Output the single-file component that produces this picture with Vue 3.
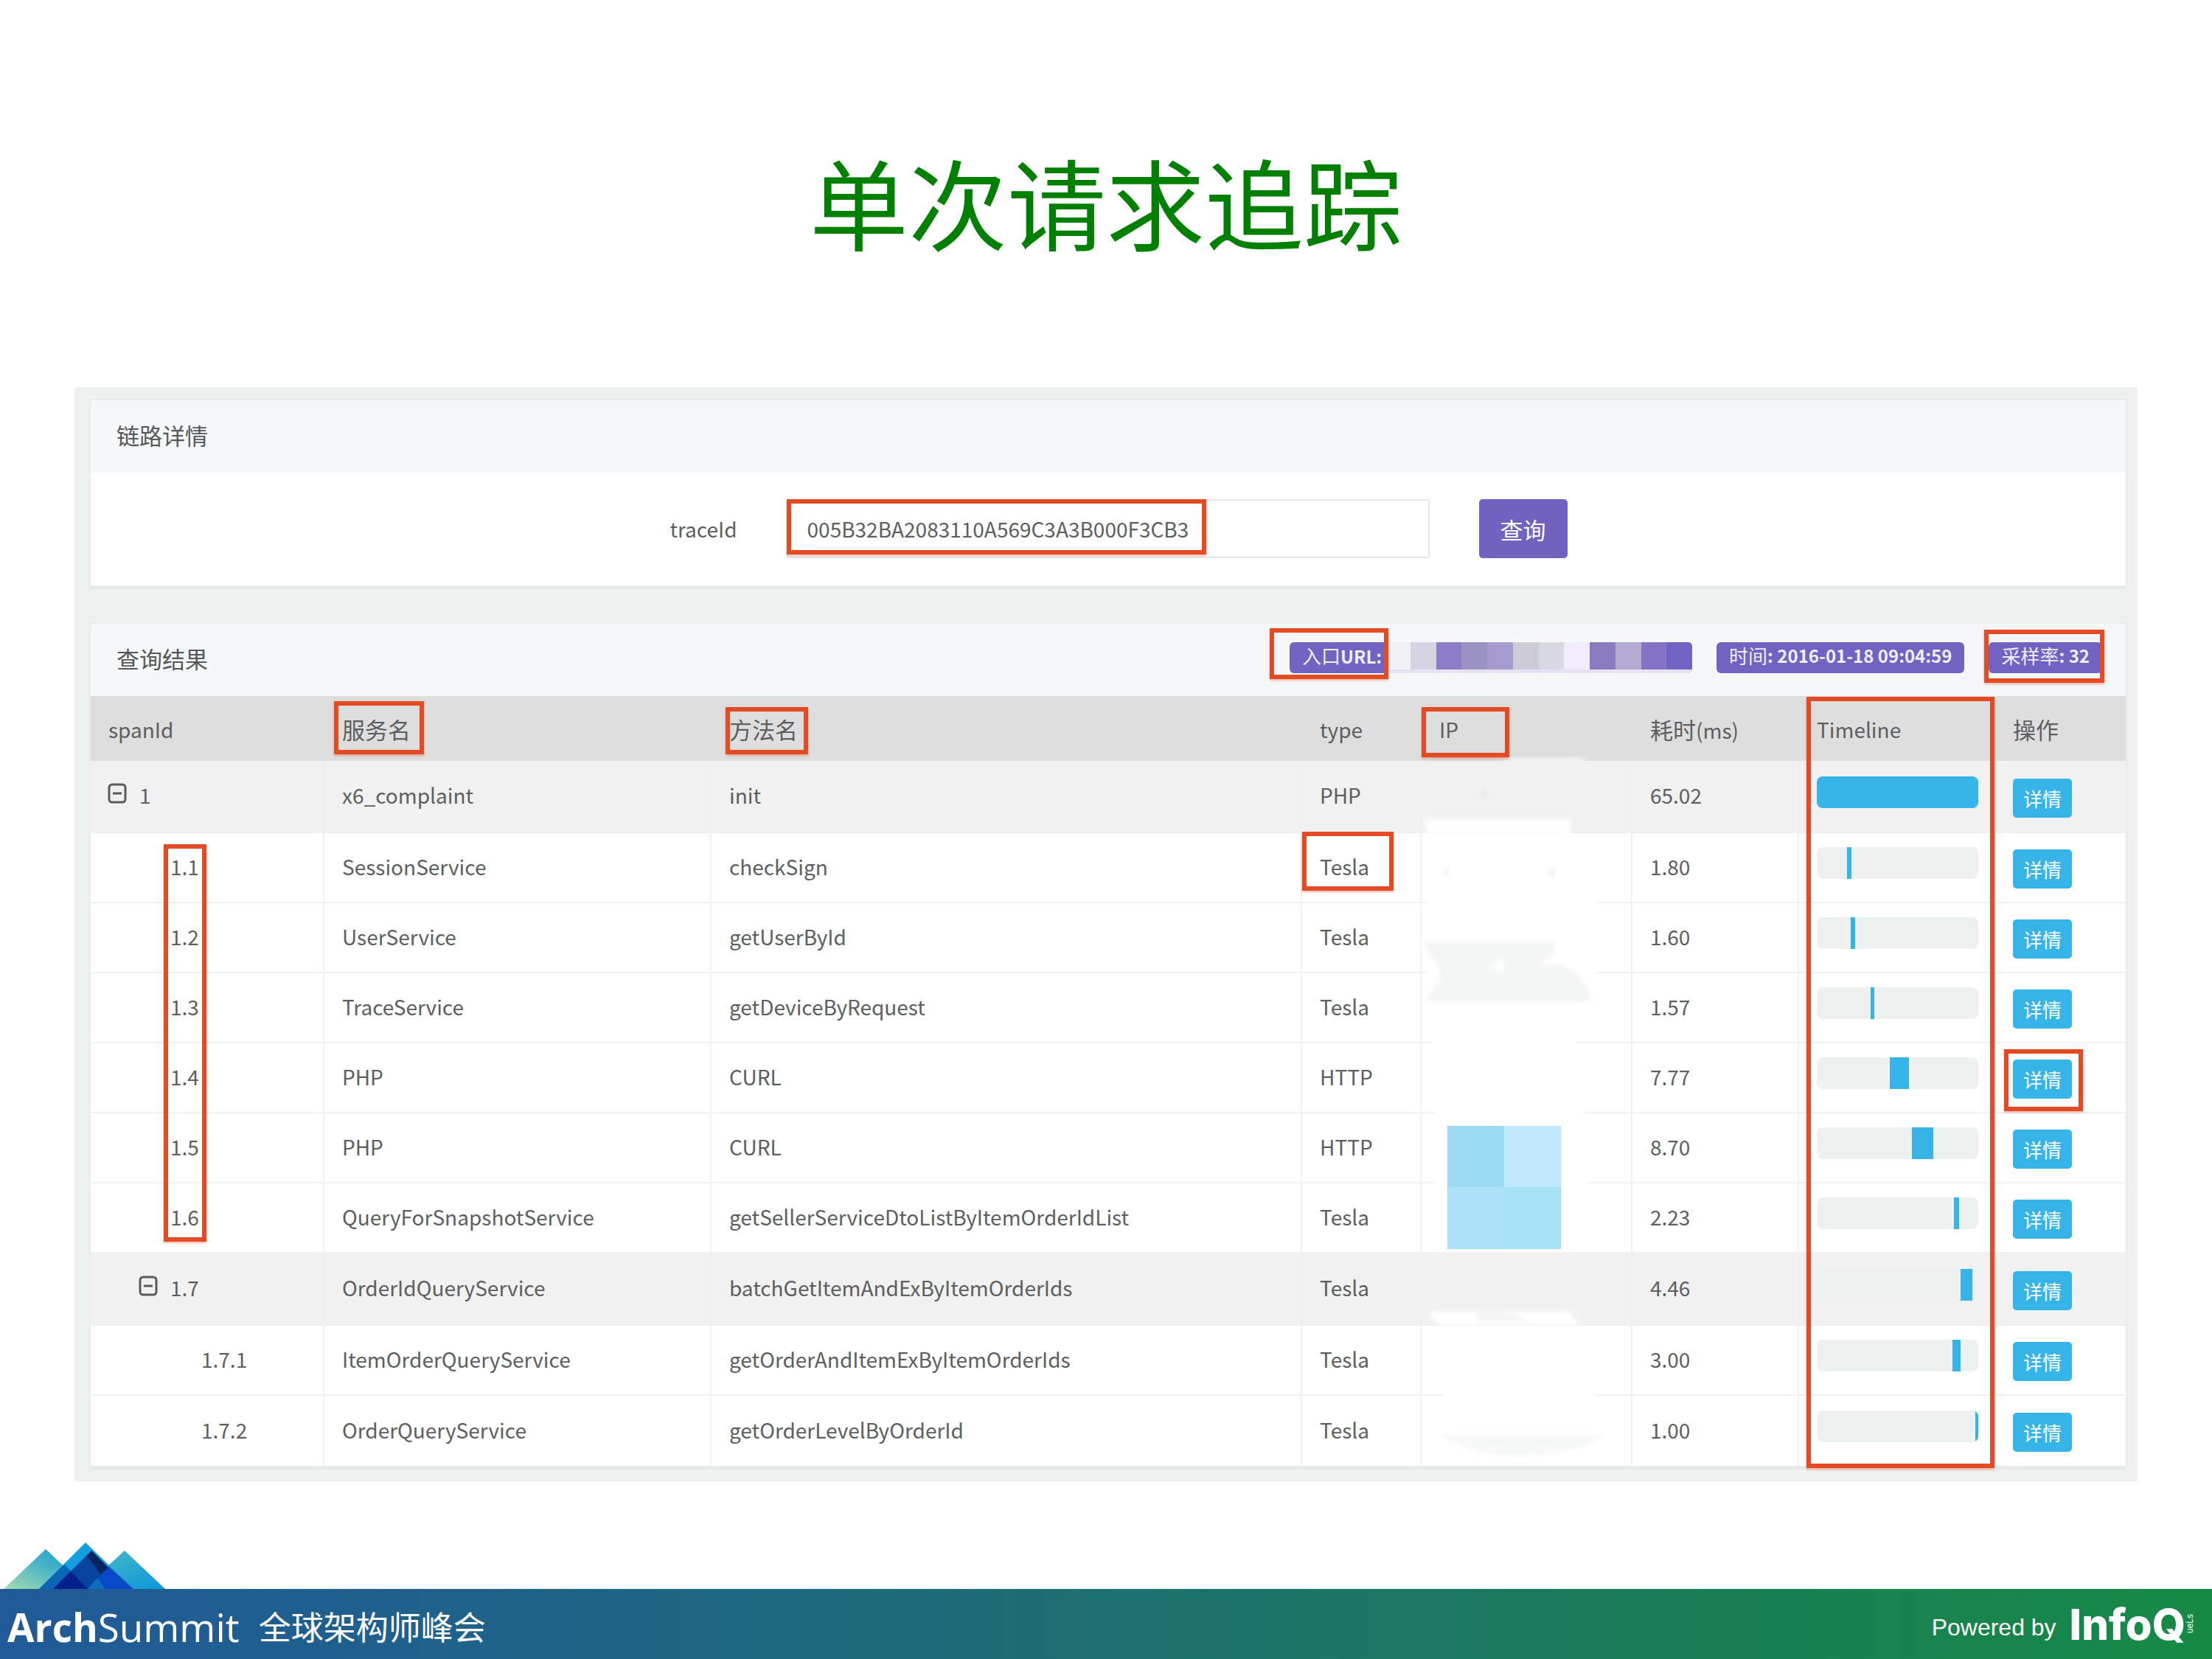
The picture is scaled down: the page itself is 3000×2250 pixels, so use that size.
<script setup>
import { ref } from 'vue'

const traceId = ref('005B32BA2083110A569C3A3B000F3CB3')

const urlBlocks = [
  '#f1f1f4', '#d6d3e2', '#8b7cc6', '#9a92c2', '#a59bcf', '#cccbd8',
  '#d8d9e4', '#f0ecfc', '#8b7cc0', '#b3aacf', '#8473c6', '#7063c3',
]

// start and length are percentages of the whole request
const spans = [
  { id: '1', depth: 0, open: true, service: 'x6_complaint', method: 'init', type: 'PHP', cost: '65.02', start: 0, length: 100 },
  { id: '1.1', depth: 1, service: 'SessionService', method: 'checkSign', type: 'Tesla', cost: '1.80', start: 18.7, length: 2.8 },
  { id: '1.2', depth: 1, service: 'UserService', method: 'getUserById', type: 'Tesla', cost: '1.60', start: 21.2, length: 2.4 },
  { id: '1.3', depth: 1, service: 'TraceService', method: 'getDeviceByRequest', type: 'Tesla', cost: '1.57', start: 33.4, length: 2 },
  { id: '1.4', depth: 1, service: 'PHP', method: 'CURL', type: 'HTTP', cost: '7.77', start: 45.3, length: 11.6 },
  { id: '1.5', depth: 1, service: 'PHP', method: 'CURL', type: 'HTTP', cost: '8.70', start: 58.8, length: 13.4 },
  { id: '1.6', depth: 1, service: 'QueryForSnapshotService', method: 'getSellerServiceDtoListByItemOrderIdList', type: 'Tesla', cost: '2.23', start: 85, length: 3.2 },
  { id: '1.7', depth: 1, open: true, service: 'OrderIdQueryService', method: 'batchGetItemAndExByItemOrderIds', type: 'Tesla', cost: '4.46', start: 89, length: 7.4 },
  { id: '1.7.1', depth: 2, service: 'ItemOrderQueryService', method: 'getOrderAndItemExByItemOrderIds', type: 'Tesla', cost: '3.00', start: 84, length: 5.2 },
  { id: '1.7.2', depth: 2, service: 'OrderQueryService', method: 'getOrderLevelByOrderId', type: 'Tesla', cost: '1.00', start: 98.2, length: 1.8 },
]
</script>

<template>
  <div class="slide">
    <h1>单次请求追踪</h1>

    <main class="console">
      <section class="card">
        <h2 class="card-head">链路详情</h2>
        <form class="search" @submit.prevent>
          <label for="trace">traceId</label>
          <div class="field">
            <input id="trace" v-model="traceId" type="text" />
            <span class="mark mark-trace"></span>
          </div>
          <button class="submit" type="submit">查询</button>
        </form>
      </section>

      <section class="card">
        <div class="card-head">
          <h2>查询结果</h2>
          <div class="badges">
            <div class="badge badge-url">
              <span class="url-label">入口<b>URL:</b></span>
              <span class="mosaic">
                <i v-for="(c, i) in urlBlocks" :key="i" :style="{ background: c }"></i>
              </span>
              <span class="mark mark-url"></span>
            </div>
            <div class="badge">时间<b>: 2016-01-18 09:04:59</b></div>
            <div class="badge badge-rate">采样率<b>: 32</b><span class="mark mark-rate"></span></div>
          </div>
        </div>

        <div class="table-wrap">
          <table>
            <colgroup>
              <col class="c-id" /><col class="c-service" /><col /><col class="c-type" />
              <col class="c-ip" /><col class="c-cost" /><col class="c-line" /><col class="c-action" />
            </colgroup>
            <thead>
              <tr>
                <th>spanId</th>
                <th><span class="cjk">服务名</span><span class="mark mark-service"></span></th>
                <th><span class="cjk">方法名</span><span class="mark mark-method"></span></th>
                <th>type</th>
                <th>IP<span class="mark mark-ip"></span></th>
                <th><span class="cjk">耗时</span>(ms)</th>
                <th>Timeline</th>
                <th><span class="cjk">操作</span></th>
              </tr>
            </thead>
            <tbody>
              <tr v-for="s in spans" :key="s.id" :class="{ group: s.open }">
                <td>
                  <span class="span-id" :class="'depth-' + s.depth">
                    <svg v-if="s.open" class="toggle" viewBox="0 0 26 28" aria-hidden="true">
                      <rect x="2" y="2" width="22" height="24" rx="4" />
                      <path d="M7 14H19" />
                    </svg>
                    {{ s.id }}
                  </span>
                  <span v-if="s.id === '1.1'" class="mark mark-children"></span>
                </td>
                <td>{{ s.service }}</td>
                <td>{{ s.method }}</td>
                <td>{{ s.type }}<span v-if="s.id === '1.1'" class="mark mark-type"></span></td>
                <td>
                  <svg v-if="s.id === '1'" class="redaction" viewBox="0 0 286 964" aria-hidden="true">
                    <g class="smear">
                      <path d="M112 6Q116 0 130 0H210Q222 0 224 10L226 14H112Z" fill="#f1f1f1" />
                      <path d="M4 85H204Q196 104 210 106H8Z" fill="#fff" />
                      <path d="M8 190H236V206H8ZM8 286H236V300H8ZM14 380H210V396H14ZM16 474H220V490H16ZM16 570H226V586H16ZM30 858H236V876H30Z" fill="#fff" />
                      <path d="M2 252H180Q186 266 160 282H190Q222 296 232 332H2Q30 306 24 290Z" fill="#f3f6f5" />
                      <path d="M84 290L108 272L116 290Z" fill="#fcfdfd" />
                      <path d="M10 753H204Q204 762 216 771H24Q14 764 10 753Z" fill="#fff" />
                      <path d="M76 756Q120 752 150 768Q110 762 76 766Z" fill="#f3f3f3" />
                      <path d="M26 920H250Q220 944 140 948Q60 948 26 920Z" fill="#f5f8f7" />
                      <circle cx="84" cy="50" r="4" fill="#e4e4e4" />
                      <path d="M30 160L36 148L36 160ZM172 160L180 148L178 164Z" fill="#e6e6e6" />
                    </g>
                    <rect x="35" y="501" width="77" height="83" fill="#9ddcf4" />
                    <rect x="112" y="501" width="77" height="83" fill="#bfe6fa" />
                    <rect x="35" y="584" width="77" height="84" fill="#abe2f6" />
                    <rect x="112" y="584" width="77" height="84" fill="#a5e2f3" />
                  </svg>
                </td>
                <td>{{ s.cost }}</td>
                <td>
                  <div class="track">
                    <i :style="{ marginLeft: s.start + '%', width: s.length + '%' }"></i>
                  </div>
                </td>
                <td>
                  <button class="detail" type="button">详情</button>
                  <span v-if="s.id === '1.4'" class="mark mark-detail"></span>
                </td>
              </tr>
            </tbody>
          </table>
          <span class="mark mark-timeline"></span>
        </div>
      </section>
    </main>

    <footer>
      <svg class="peaks" viewBox="0 0 224 63" aria-hidden="true">
        <defs>
          <linearGradient id="peak-l" x1="0" y1="1" x2="1" y2="0">
            <stop offset="0" stop-color="#a5dcae" /><stop offset="0.55" stop-color="#45b1c6" /><stop offset="1" stop-color="#0e9fdc" />
          </linearGradient>
          <linearGradient id="peak-r" x1="0" y1="0" x2="1" y2="1">
            <stop offset="0" stop-color="#4dbcc4" /><stop offset="1" stop-color="#0a97dc" />
          </linearGradient>
        </defs>
        <path d="M5 63L62 9L119 63Z" fill="url(#peak-l)" />
        <path d="M112 63L169 11L224 63Z" fill="url(#peak-r)" />
        <path d="M53 63L116 0L181 63Z" fill="#129fdd" />
        <path d="M53 63L87 30L119 63Z" fill="#0c63ae" />
        <path d="M87 30L96 39L72 63H53Z" fill="#0a67b6" />
        <path d="M72 63L124 11L148 35L119 63Z" fill="#08439f" />
        <path d="M124 11L148 35L138 45L118 18Z" fill="#06265f" />
        <path d="M148 33L181 63H142L132 48Z" fill="#0648c8" />
        <path d="M72 63L96 39L119 63Z" fill="#031f8c" />
        <path d="M119 63L132 48L142 63Z" fill="#0b6fc0" />
      </svg>
      <div class="bar">
        <p class="brand"><b>Arch</b>Summit <span>全球架构师峰会</span></p>
        <p class="powered">Powered by <b>InfoQ</b><small>ueLs</small></p>
      </div>
    </footer>
  </div>
</template>

<style>
body {
  margin: 0;
  background: #fff;
}
</style>

<style scoped>
.slide {
  display: flex;
  flex-direction: column;
  min-height: 100vh;
  font-family: "Noto Sans CJK SC", "Noto Sans", sans-serif;
  font-size: 28px;
  line-height: 40px;
  color: #5c5f60;
}
h1 {
  margin: 0;
  padding: 192px 0 173px;
  font-size: 134px;
  font-weight: 400;
  line-height: 160px;
  text-align: center;
  color: #008000;
}
h2 {
  margin: 0;
  font-size: 31px;
  font-weight: 400;
}
.console {
  display: flex;
  flex-direction: column;
  gap: 52px;
  margin: 0 101px;
  padding: 18px 16px 21px 22px;
  background: #edf1f0;
}
.card {
  background: #fff;
  box-shadow: 0 0 0 2px #e8eceb, 0 4px 3px #dfe4e3;
}
.card-head {
  box-sizing: border-box;
  display: flex;
  align-items: center;
  justify-content: space-between;
  height: 98px;
  padding: 0 32px 4px 35px;
  background: #f4f8f8;
  color: #555859;
}
.search {
  display: flex;
  align-items: center;
  justify-content: center;
  gap: 67px;
  padding: 36px 0 37px 28px;
}
.field {
  position: relative;
}
input {
  box-sizing: border-box;
  display: block;
  width: 872px;
  height: 80px;
  padding: 0 26px;
  border: 2px solid #e4e6e6;
  border-radius: 3px;
  background: #fff;
  font: inherit;
  color: inherit;
}
button {
  padding: 0;
  border: 0;
  font-family: inherit;
  color: #fff;
}
.submit {
  width: 120px;
  height: 80px;
  border-radius: 5px;
  background: #7162c0;
  font-size: 31px;
}
.badges {
  display: flex;
  gap: 33px;
  margin-top: -2px;
}
.badge {
  position: relative;
  display: flex;
  box-sizing: border-box;
  height: 42px;
  padding: 0 17px;
  border-radius: 6px;
  background: #7063c1;
  font-size: 26px;
  line-height: 36px;
  white-space: pre;
  color: #f0eefa;
}
.badge b {
  font-size: 24px;
}
.badge-url {
  width: 546px;
  padding-right: 0;
}
.url-label {
  width: 112px;
}
.mosaic {
  display: flex;
  flex: 1;
  border-bottom: 5px solid #e6e2f4;
  border-radius: 0 6px 6px 0;
  overflow: hidden;
}
.mosaic i {
  flex: 1;
}
.table-wrap {
  position: relative;
}
table {
  width: 100%;
  table-layout: fixed;
  border-collapse: separate;
  border-spacing: 0;
}
.c-id { width: 317px; }
.c-service { width: 525px; }
.c-type { width: 162px; }
.c-ip { width: 286px; }
.c-cost { width: 226px; }
.c-line { width: 266px; }
.c-action { width: 177px; }
th,
td {
  position: relative;
  box-sizing: border-box;
  height: 95px;
  padding: 0 22px 4px 24px;
  border-right: 2px solid #f0f1f1;
  border-bottom: 2px solid #f0f1f1;
  text-align: left;
  font-weight: 400;
  white-space: nowrap;
}
th {
  height: 88px;
  padding-top: 4px;
  padding-bottom: 0;
  border-color: #dedede;
  background: #dedede;
}
.cjk {
  font-size: 31px;
}
.group td {
  height: 98px;
  border-color: #eeefef;
  background: #f1f1f1;
}
td:last-child {
  border-right: 0;
}
tbody tr:last-child td {
  border-bottom: 0;
}
.span-id {
  display: flex;
  align-items: center;
  justify-content: flex-start;
}
.depth-0 { padding-left: 42px; }
.depth-1 { padding-left: 84px; }
.depth-2 { padding-left: 126px; }
.toggle {
  width: 26px;
  height: 28px;
  margin: -4px 17px 0 -43px;
  fill: none;
  stroke: #5a5a5a;
  stroke-width: 3;
}
.track {
  width: 219px;
  height: 43px;
  margin-bottom: 8px;
  border-radius: 8px;
  background: #edf1f0;
  overflow: hidden;
}
.track i {
  display: block;
  height: 100%;
  background: #37b4e7;
}
.detail {
  display: block;
  width: 80px;
  height: 53px;
  margin-top: 8px;
  border-radius: 5px;
  background: #37b4e7;
  font-size: 26px;
}
.redaction {
  position: absolute;
  top: -6px;
  left: 0;
  z-index: 1;
  width: 286px;
  height: 964px;
}
.smear {
  filter: blur(3px);
}
.mark {
  position: absolute;
  z-index: 2;
  box-sizing: border-box;
  border: 6px solid #e44a24;
  box-shadow: 0 2px 3px #e44a2466;
  pointer-events: none;
}
.mark-trace { top: 0; left: 0; width: 569px; height: 75px; }
.mark-url { top: -19px; left: -27px; width: 161px; height: 69px; }
.mark-rate { top: -17px; left: -6px; right: -3px; height: 72px; }
.mark-service { top: 7px; left: 13px; width: 122px; height: 72px; }
.mark-method { top: 15px; left: 19px; width: 112px; height: 64px; }
.mark-ip { top: 15px; left: 0; width: 119px; height: 68px; }
.mark-children { top: 15px; left: 99px; width: 58px; height: 539px; }
.mark-type { top: -2px; left: 0; width: 124px; height: 80px; }
.mark-detail { top: 8px; left: 12px; width: 107px; height: 84px; }
.mark-timeline { top: 1px; right: 178px; bottom: -3px; width: 255px; }
footer {
  margin-top: auto;
}
.peaks {
  display: block;
  width: 224px;
  height: 63px;
}
.bar {
  box-sizing: border-box;
  display: flex;
  align-items: center;
  justify-content: space-between;
  height: 95px;
  padding: 8px 24px 0 10px;
  background: linear-gradient(90deg, #205a98, #1e6584 30%, #1b7a5c 70%, #168a45);
  color: #fff;
}
.bar p {
  display: flex;
  align-items: center;
  margin: 0;
}
.brand {
  font-family: "Open Sans", "Noto Sans CJK SC", sans-serif;
  font-size: 53px;
  line-height: 72px;
}
.brand span {
  margin-left: 26px;
  font-size: 44px;
}
.powered {
  font-family: "Liberation Sans", sans-serif;
  font-size: 32px;
}
.powered b {
  margin: -8px 0 0 18px;
  font-family: Inter, sans-serif;
  font-size: 58px;
  font-weight: 800;
}
.powered small {
  margin-top: -8px;
  font-size: 12px;
  line-height: 12px;
  writing-mode: sideways-lr;
}
</style>
